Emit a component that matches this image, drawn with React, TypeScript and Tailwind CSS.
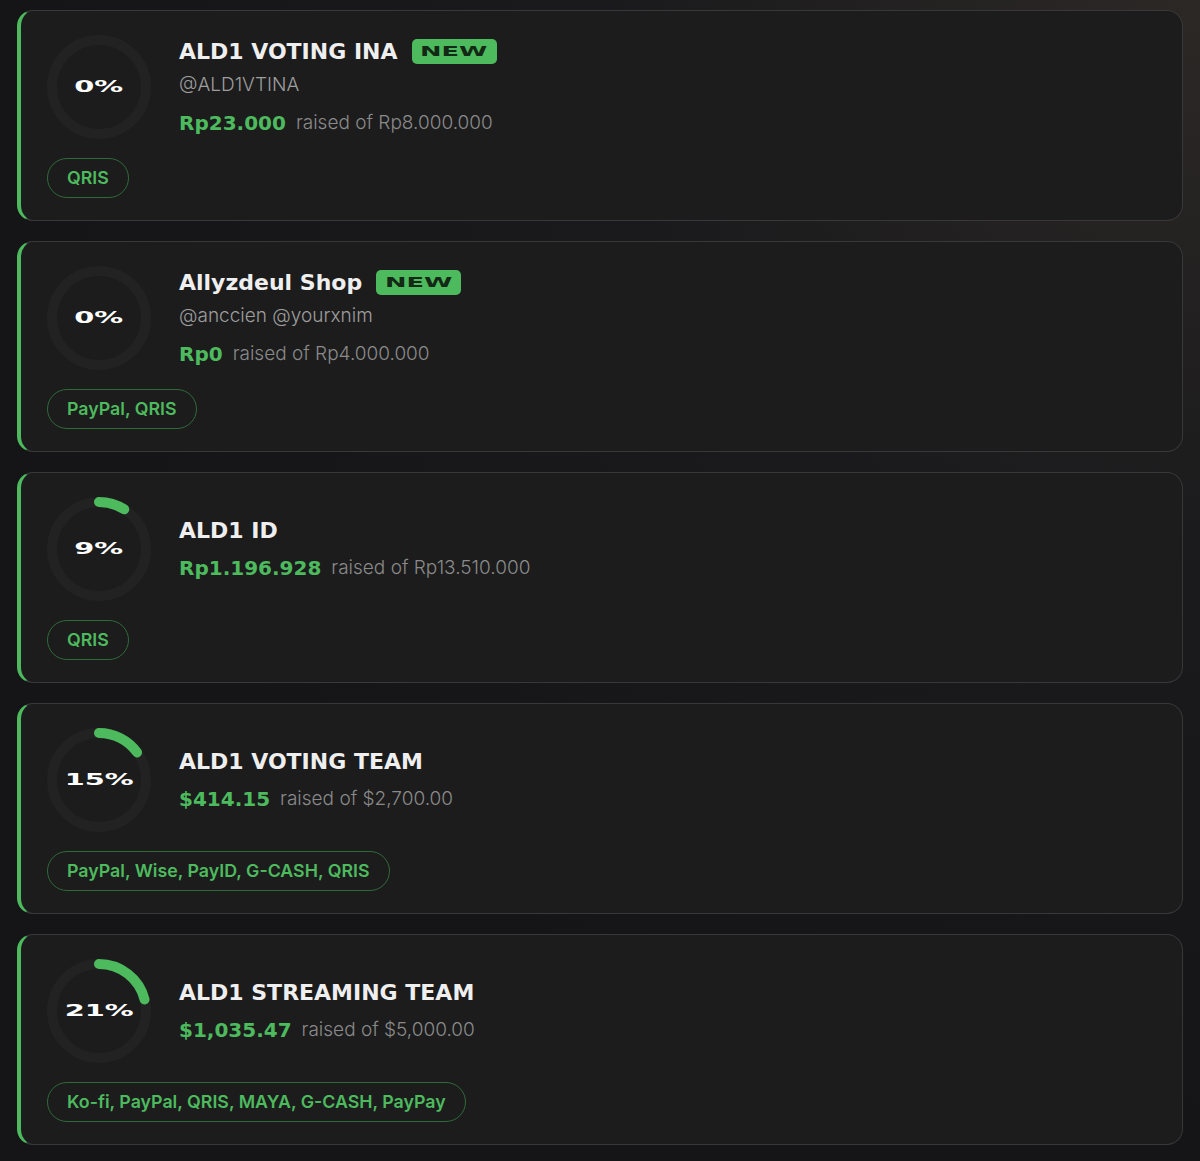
import React from "react";

type Item = {
  title: string;
  isNew?: boolean;
  handle?: string;
  amount: string;
  goal: string;
  pct: number;
  methods: string;
};

const items: Item[] = [
  { title: "ALD1 VOTING INA", isNew: true, handle: "@ALD1VTINA", amount: "Rp23.000", goal: "raised of Rp8.000.000", pct: 0, methods: "QRIS" },
  { title: "Allyzdeul Shop", isNew: true, handle: "@anccien @yourxnim", amount: "Rp0", goal: "raised of Rp4.000.000", pct: 0, methods: "PayPal, QRIS" },
  { title: "ALD1 ID", amount: "Rp1.196.928", goal: "raised of Rp13.510.000", pct: 9, methods: "QRIS" },
  { title: "ALD1 VOTING TEAM", amount: "$414.15", goal: "raised of $2,700.00", pct: 15, methods: "PayPal, Wise, PayID, G-CASH, QRIS" },
  { title: "ALD1 STREAMING TEAM", amount: "$1,035.47", goal: "raised of $5,000.00", pct: 21, methods: "Ko-fi, PayPal, QRIS, MAYA, G-CASH, PayPay" },
];

function Ring({ pct }: { pct: number }) {
  const r = 47;
  const c = 2 * Math.PI * r;
  const len = (pct / 100) * c;
  return (
    <div className="relative w-[104px] h-[104px] shrink-0">
      <svg width="104" height="104" viewBox="0 0 104 104" className="absolute inset-0">
        <circle cx="52" cy="52" r={r} fill="none" stroke="#222223" strokeWidth="10" />
        {pct > 0 && (
          <circle
            cx="52"
            cy="52"
            r={r}
            fill="none"
            stroke="#4dba5e"
            strokeWidth="10"
            strokeLinecap="round"
            strokeDasharray={`${len} ${c}`}
            transform="rotate(-90 52 52)"
          />
        )}
      </svg>
      <div className="absolute inset-0 flex items-center justify-center">
        <span className="inline-block scale-x-[1.8] font-['DejaVu_Sans',sans-serif] font-bold text-[16px] text-white leading-none">
          {pct}%
        </span>
      </div>
    </div>
  );
}

function Card({ item }: { item: Item }) {
  return (
    <div className="rounded-[16px] border border-[#38383a] border-l-4 border-l-[#4dba5e] bg-[#1c1c1d] pl-[26px] pt-[24px] pb-[22px]">
      <div className="flex items-center gap-[28px]">
        <Ring pct={item.pct} />
        <div className="flex flex-col">
          <div className="h-[30px] flex items-center">
            <span className="font-['DejaVu_Sans',sans-serif] font-bold text-[22px] text-[#efefef] leading-none">
              {item.title}
            </span>
            {item.isNew && (
              <span className="ml-[14px] w-[85px] h-[25px] rounded-[5px] bg-[#4dba5e] flex items-center justify-center">
                <span className="inline-block scale-x-[1.9] font-['DejaVu_Sans',sans-serif] font-bold text-[13.5px] text-[#132815] leading-none">
                  NEW
                </span>
              </span>
            )}
          </div>
          {item.handle && (
            <div className="mt-[4px] h-[30px] flex items-center font-['Inter',sans-serif] font-light text-[19px] text-[#9e9e9e]">
              {item.handle}
            </div>
          )}
          <div className="mt-[7px] h-[30px] flex items-center gap-[10px]">
            <span className="font-['DejaVu_Sans',sans-serif] font-bold text-[20px] text-[#4dba5e] leading-none">
              {item.amount}
            </span>
            <span className="font-['Inter',sans-serif] font-light text-[19px] text-[#8a8a8a] leading-none">
              {item.goal}
            </span>
          </div>
        </div>
      </div>
      <div className="mt-[19px] flex">
        <span className="h-[40px] px-[19px] rounded-full border border-[#2f6a3a] flex items-center font-['Inter',sans-serif] font-semibold text-[17.8px] text-[#4dba5e]">
          {item.methods}
        </span>
      </div>
    </div>
  );
}

export default function App() {
  return (
    <div className="min-h-[1161px] w-full bg-[#151517] bg-[radial-gradient(ellipse_at_top_right,#2c2826_0%,#1a1a1c_35%,#151517_70%)] px-[17px] pt-[10px] pb-[15px]">
      <div className="flex flex-col gap-[20px]">
        {items.map((it) => (
          <Card key={it.title} item={it} />
        ))}
      </div>
    </div>
  );
}
